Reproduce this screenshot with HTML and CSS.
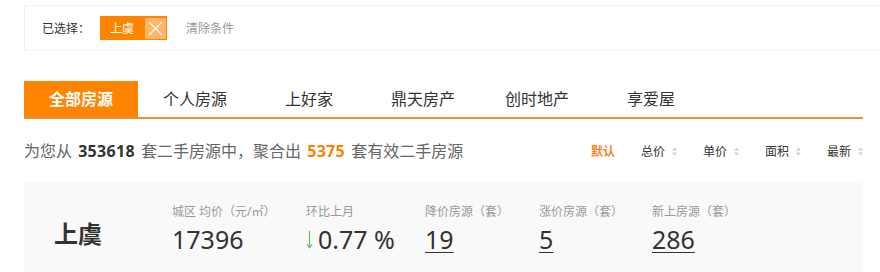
FILE: index.html
```html
<!DOCTYPE html>
<html lang="zh-CN">
<head>
<meta charset="utf-8">
<title>二手房源</title>
<link rel="stylesheet" href="styles.css">
</head>
<body>
<div class="page">
  <div class="filter">
    <span class="filter-label">已选择：</span>
    <span class="tag">
      <span class="tag-text">上虞</span>
      <span class="tag-close"><svg width="21" height="21" viewBox="0 0 21 21"><path d="M4 4 L17 17 M17 4 L4 17" stroke="#fff" stroke-width="1.2" fill="none"/></svg></span>
    </span>
    <a class="clear">清除条件</a>
  </div>

  <ul class="tabs">
    <li class="tab active">全部房源</li>
    <li class="tab">个人房源</li>
    <li class="tab">上好家</li>
    <li class="tab">鼎天房产</li>
    <li class="tab">创时地产</li>
    <li class="tab">享爱屋</li>
  </ul>

  <div class="summary-row">
    <p class="summary">为您从 <b>353618</b> 套二手房源中，聚合出 <b class="hl">5375</b> 套有效二手房源</p>
    <ul class="sort">
      <li class="sort-item active">默认</li>
      <li class="sort-item">总价<svg class="arr" width="5" height="9" viewBox="0 0 5 9"><path d="M2.5 0.5 L5 3.5 L0 3.5 Z M2.5 8.5 L5 5.5 L0 5.5 Z" fill="#d0d0d0"/></svg></li>
      <li class="sort-item">单价<svg class="arr" width="5" height="9" viewBox="0 0 5 9"><path d="M2.5 0.5 L5 3.5 L0 3.5 Z M2.5 8.5 L5 5.5 L0 5.5 Z" fill="#d0d0d0"/></svg></li>
      <li class="sort-item">面积<svg class="arr" width="5" height="9" viewBox="0 0 5 9"><path d="M2.5 0.5 L5 3.5 L0 3.5 Z M2.5 8.5 L5 5.5 L0 5.5 Z" fill="#d0d0d0"/></svg></li>
      <li class="sort-item">最新<svg class="arr" width="5" height="9" viewBox="0 0 5 9"><path d="M2.5 0.5 L5 3.5 L0 3.5 Z M2.5 8.5 L5 5.5 L0 5.5 Z" fill="#d0d0d0"/></svg></li>
    </ul>
  </div>

  <div class="stats">
    <div class="stats-name">上虞</div>
    <div class="stats-grid">
      <div class="stat">
        <div class="stat-label">城区 均价（元/㎡）</div>
        <div class="stat-value">17396</div>
      </div>
      <div class="stat">
        <div class="stat-label">环比上月</div>
        <div class="stat-value"><svg class="down" width="7" height="20" viewBox="0 0 7 20"><path d="M3.5 2 L3.5 18.5 M0.8 15 L3.5 18.8 L6.2 15" stroke="#5fb55f" stroke-width="1.1" fill="none"/></svg>0.77 %</div>
      </div>
      <div class="stat">
        <div class="stat-label">降价房源（套）</div>
        <div class="stat-value"><a class="num">19</a></div>
      </div>
      <div class="stat">
        <div class="stat-label">涨价房源（套）</div>
        <div class="stat-value"><a class="num">5</a></div>
      </div>
      <div class="stat">
        <div class="stat-label">新上房源（套）</div>
        <div class="stat-value"><a class="num">286</a></div>
      </div>
    </div>
  </div>
</div>
</body>
</html>
```

FILE: styles.css
```css
* { box-sizing: border-box; }
html, body { margin: 0; padding: 0; background: #fff; overflow: hidden; }
body {
  font-family: "Noto Sans", "Noto Sans CJK SC", sans-serif;
  color: #333;
}
ul { list-style: none; margin: 0; padding: 0; }
p { margin: 0; }

.page {
  padding-left: 24px;
  width: 863px;
}

/* filter box */
.filter {
  margin-top: 5px;
  width: 880px;
  height: 46px;
  border: 1px solid #efefef;
  border-bottom-color: #f4f4f4;
  display: flex;
  align-items: center;
  padding-left: 17px;
  font-size: 12px;
}
.filter-label { color: #333; width: 48px; }
.tag {
  margin-left: 10px;
  height: 24px;
  background: #ff8400;
  display: flex;
  align-items: center;
  padding-left: 10px;
  padding-right: 1px;
}
.tag-text { color: #fff; }
.tag-close {
  margin-left: 11px;
  width: 21px;
  height: 21px;
  background: #ffb468;
  display: flex;
}
.clear { margin-left: 19px; color: #999; }

/* tabs */
.tabs {
  margin-top: 30px;
  display: flex;
  border-bottom: 2px solid #e8913b;
}
.tab {
  width: 114px;
  height: 36px;
  line-height: 36px;
  text-align: center;
  font-size: 16px;
  color: #333;
}
.tab.active {
  background: #ff8400;
  color: #fff;
  font-weight: bold;
}

/* summary */
.summary-row {
  margin-top: 20px;
  height: 24px;
  display: flex;
  justify-content: space-between;
  align-items: center;
}
.summary {
  font-size: 16px;
  line-height: 24px;
  color: #666;
  word-spacing: 2px;
}
.summary b { color: #333; font-weight: bold; letter-spacing: 0.3px; }
.summary b.hl { color: #ff7f00; }
.sort {
  display: flex;
  align-items: center;
  font-size: 12px;
}
.sort-item {
  margin-left: 26px;
  display: flex;
  align-items: center;
  color: #333;
}
.sort-item.active { color: #f5822a; font-weight: bold; }
.arr { margin-left: 7px; }

/* stats */
.stats {
  margin-top: 20px;
  height: 100px;
  background: #f9f9f9;
  display: flex;
  padding: 20px 0 0 30px;
}
.stats-name {
  width: 118px;
  margin-top: 16px;
  font-size: 24px;
  line-height: 30px;
  font-weight: bold;
  color: #333;
}
.stats-grid {
  display: grid;
  grid-template-columns: 134px 119px 114px 113px auto;
}
.stat-label {
  font-size: 12px;
  line-height: 18px;
  color: #999;
}
.stat-value {
  margin-top: 3px;
  font-size: 25px;
  line-height: 30px;
  color: #333;
  display: flex;
  align-items: center;
}
.down { margin-right: 5px; }
.num {
  color: #333;
  text-decoration: underline;
  text-decoration-thickness: 1px;
  text-underline-offset: 3px;
}
```
